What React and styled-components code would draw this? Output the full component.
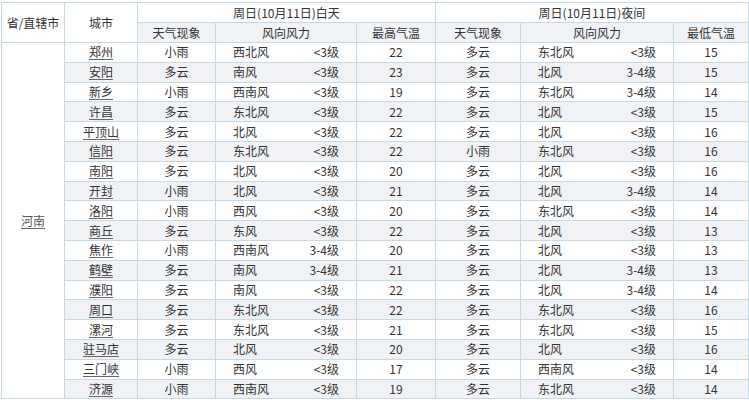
import React from "react";
import styled, { createGlobalStyle } from "styled-components";

const Global = createGlobalStyle`
  html, body { margin: 0; padding: 0; background: #fff; }
  body { font-family: "Noto Sans CJK SC", "Microsoft YaHei", sans-serif; font-size: 12px; color: #333; }
`;

const Wrap = styled.div`
  padding: 2px 0 0 1px;
`;

const Table = styled.table`
  border-collapse: collapse;
  table-layout: fixed;
  width: 747px;
  border: 1px solid #b3d0de;
`;

const Th = styled.th`
  font-weight: normal;
  height: ${(p) => p.$h || 19}px;
  padding: 0;
  text-align: center;
  border: 1px solid #c4dbe6;
  background: ${(p) => (p.$gray ? "#f1f2f5" : "#fff")};
  color: #333;
  line-height: 16px;
`;

const Tr = styled.tr`
  background: ${(p) => (p.$gray ? "#f1f2f5" : "#fff")};
`;

const Td = styled.td`
  height: 18.8px;
  padding: 0;
  text-align: center;
  border: 1px solid #c4dbe6;
  line-height: 16px;
  white-space: nowrap;
`;

const ProvCell = styled.td`
  padding: 0;
  text-align: center;
  vertical-align: middle;
  border: 1px solid #c4dbe6;
  background: #fff;
`;

const WindCell = styled.td`
  padding: 0 17px 0 17px;
  border: 1px solid #c4dbe6;
  line-height: 16px;
`;

const WindInner = styled.div`
  display: flex;
  justify-content: space-between;
`;

const Link = styled.a`
  color: ${(p) => (p.$light ? "#555" : "#333")};
  text-decoration: underline;
  text-decoration-color: #666;
  text-underline-offset: 2px;
`;

const rows = [
  ["郑州", "小雨", "西北风", "<3级", 22, "多云", "东北风", "<3级", 15],
  ["安阳", "多云", "南风", "<3级", 23, "多云", "北风", "3-4级", 15],
  ["新乡", "小雨", "西南风", "<3级", 19, "多云", "东北风", "3-4级", 14],
  ["许昌", "多云", "东北风", "<3级", 22, "多云", "北风", "<3级", 15],
  ["平顶山", "多云", "北风", "<3级", 22, "多云", "北风", "<3级", 16],
  ["信阳", "多云", "东北风", "<3级", 22, "小雨", "东北风", "<3级", 16],
  ["南阳", "多云", "北风", "<3级", 20, "多云", "北风", "<3级", 16],
  ["开封", "小雨", "北风", "<3级", 21, "多云", "北风", "3-4级", 14],
  ["洛阳", "小雨", "西风", "<3级", 20, "多云", "东北风", "<3级", 14],
  ["商丘", "多云", "东风", "<3级", 22, "多云", "北风", "<3级", 13],
  ["焦作", "小雨", "西南风", "3-4级", 20, "多云", "北风", "<3级", 13],
  ["鹤壁", "多云", "南风", "3-4级", 21, "多云", "北风", "3-4级", 13],
  ["濮阳", "多云", "南风", "<3级", 22, "多云", "北风", "3-4级", 14],
  ["周口", "多云", "东北风", "<3级", 22, "多云", "东北风", "<3级", 16],
  ["漯河", "多云", "东北风", "<3级", 21, "多云", "东北风", "<3级", 15],
  ["驻马店", "多云", "北风", "<3级", 20, "多云", "北风", "<3级", 16],
  ["三门峡", "小雨", "西风", "<3级", 17, "多云", "西南风", "<3级", 14],
  ["济源", "小雨", "西南风", "<3级", 19, "多云", "东北风", "<3级", 14],
];

const widths = [63, 73, 78, 141, 79, 85, 153, 75];

export default function App() {
  return (
    <Wrap>
      <Global />
      <Table>
        <colgroup>
          {widths.map((w, i) => (
            <col key={i} style={{ width: w }} />
          ))}
        </colgroup>
        <thead>
          <tr>
            <Th rowSpan={2}>省/直辖市</Th>
            <Th rowSpan={2}>城市</Th>
            <Th colSpan={3}>周日(10月11日)白天</Th>
            <Th colSpan={3}>周日(10月11日)夜间</Th>
          </tr>
          <tr>
            <Th $gray>天气现象</Th>
            <Th $gray>风向风力</Th>
            <Th $gray>最高气温</Th>
            <Th $gray>天气现象</Th>
            <Th $gray>风向风力</Th>
            <Th $gray>最低气温</Th>
          </tr>
        </thead>
        <tbody>
          {rows.map((r, i) => (
            <Tr key={r[0]} $gray={i % 2 === 1}>
              {i === 0 && (
                <ProvCell rowSpan={rows.length}>
                  <Link href="#" $light>河南</Link>
                </ProvCell>
              )}
              <Td>
                <Link href="#">{r[0]}</Link>
              </Td>
              <Td>{r[1]}</Td>
              <WindCell>
                <WindInner>
                  <span>{r[2]}</span>
                  <span>{r[3]}</span>
                </WindInner>
              </WindCell>
              <Td>{r[4]}</Td>
              <Td>{r[5]}</Td>
              <WindCell>
                <WindInner>
                  <span>{r[6]}</span>
                  <span>{r[7]}</span>
                </WindInner>
              </WindCell>
              <Td>{r[8]}</Td>
            </Tr>
          ))}
        </tbody>
      </Table>
    </Wrap>
  );
}
